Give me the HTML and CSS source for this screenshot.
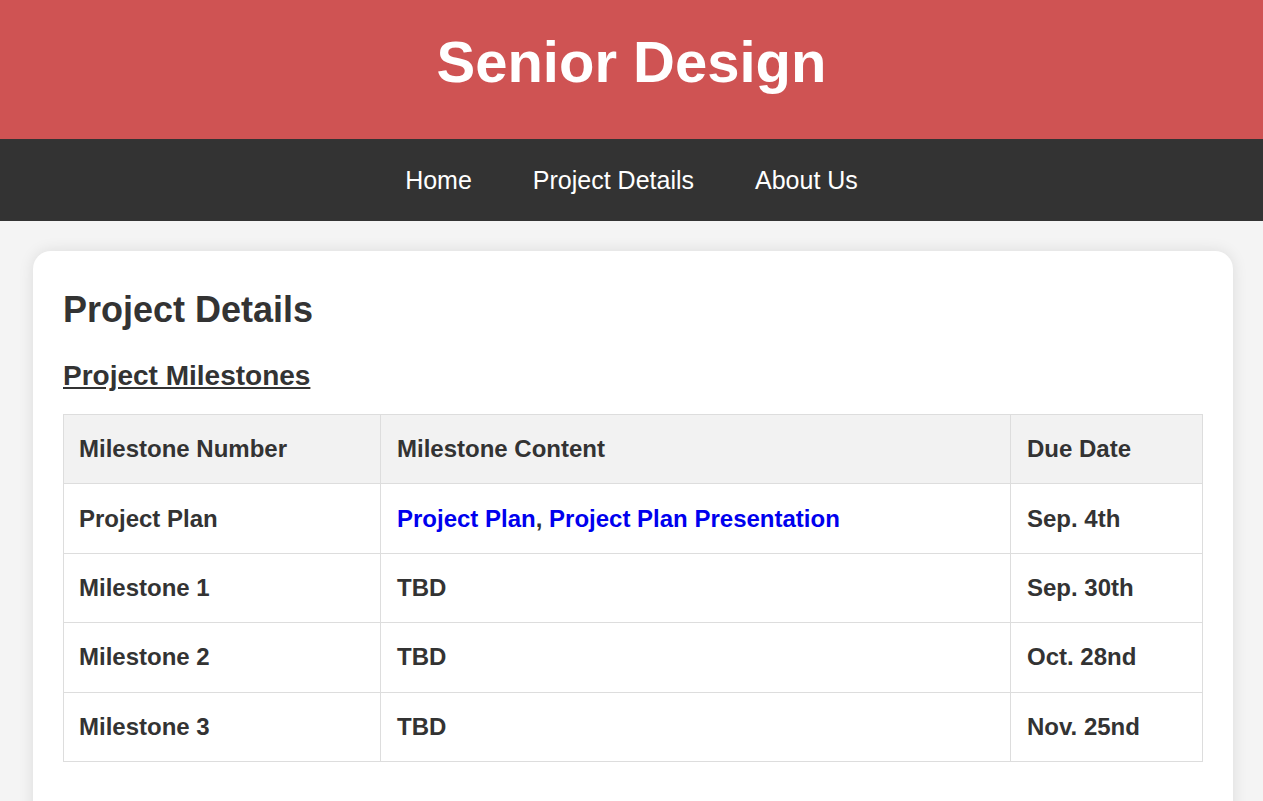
FILE: index.html
```html
<!DOCTYPE html>
<html lang="en">
<head>
<meta charset="utf-8">
<title>Senior Design - Project Details</title>
<link rel="stylesheet" href="styles.css">
</head>
<body>
<header class="site-header">
  <h1 class="site-title">Senior Design</h1>
</header>
<nav class="site-nav">
  <a href="#" class="nav-link">Home</a>
  <a href="#" class="nav-link">Project Details</a>
  <a href="#" class="nav-link">About Us</a>
</nav>
<main class="page">
  <section class="card">
    <h2 class="card-title">Project Details</h2>
    <h3 class="section-title">Project Milestones</h3>
    <table class="milestones">
      <colgroup>
        <col class="col-num">
        <col class="col-content">
        <col class="col-date">
      </colgroup>
      <thead>
        <tr><th>Milestone Number</th><th>Milestone Content</th><th>Due Date</th></tr>
      </thead>
      <tbody>
        <tr><td>Project Plan</td><td><a href="#" class="doc-link">Project Plan</a>, <a href="#" class="doc-link">Project Plan Presentation</a></td><td>Sep. 4th</td></tr>
        <tr><td>Milestone 1</td><td>TBD</td><td>Sep. 30th</td></tr>
        <tr><td>Milestone 2</td><td>TBD</td><td>Oct. 28nd</td></tr>
        <tr><td>Milestone 3</td><td>TBD</td><td>Nov. 25nd</td></tr>
      </tbody>
    </table>
  </section>
</main>
</body>
</html>
```

FILE: styles.css
```css
html, body {
  margin: 0;
  padding: 0;
}

body {
  background: #f4f4f4;
  font-family: "Liberation Sans", Arial, sans-serif;
  color: #333333;
  overflow: hidden;
}

.site-header {
  background: #cf5353;
  padding: 28px 0 44px;
  text-align: center;
}

.site-title {
  margin: 0;
  color: #ffffff;
  font-size: 58px;
  line-height: 67px;
  font-weight: bold;
}

.site-nav {
  background: #333333;
  display: flex;
  justify-content: center;
  gap: 61px;
  padding: 27px 0 26px;
}

.nav-link {
  color: #ffffff;
  text-decoration: none;
  font-size: 25px;
  line-height: 29px;
}

.page {
  padding: 30px 30px 0 33px;
}

.card {
  background: #ffffff;
  border-radius: 18px;
  box-shadow: 0 0 15px rgba(0, 0, 0, 0.1);
  padding: 38px 30px 40px;
  min-height: 600px;
}

.card-title {
  margin: 0;
  font-size: 36px;
  line-height: 41px;
  font-weight: bold;
  color: #333333;
}

.section-title {
  margin: 30px 0 0;
  font-size: 28px;
  line-height: 32px;
  font-weight: bold;
  text-decoration: underline;
  color: #333333;
}

.milestones {
  margin-top: 22px;
  width: 100%;
  border-collapse: collapse;
  font-size: 24px;
  font-weight: bold;
  color: #333333;
}

.col-num { width: 317px; }
.col-date { width: 192px; }

.milestones th,
.milestones td {
  border: 1px solid #dddddd;
  text-align: left;
  padding: 0 15px 0 16px;
  height: 68.4px;
  line-height: 28px;
}

.milestones th:first-child,
.milestones td:first-child {
  padding-left: 15px;
}

.milestones th {
  background: #f2f2f2;
}

.doc-link {
  color: #0000ee;
  text-decoration: none;
}
```
